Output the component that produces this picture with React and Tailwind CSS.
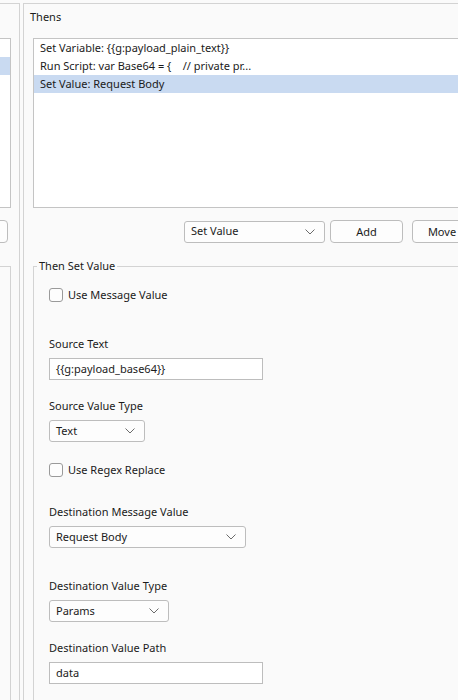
import React from "react";

function Chevron({ className = "" }) {
  return (
    <svg width="10" height="6" viewBox="0 0 10 6" className={className}>
      <path d="M0.5 0.5 L5 5 L9.5 0.5" fill="none" stroke="#6b6b6b" strokeWidth="1" />
    </svg>
  );
}

function Select({ value, w }) {
  return (
    <div
      className={`flex items-center justify-between h-[22px] border border-[#bdbdbd] rounded-[3px] bg-[#fdfdfd] pl-[6px] pr-[9px] ${w}`}
    >
      <span className="leading-[16px] -mt-[1px]">{value}</span>
      <Chevron />
    </div>
  );
}

function Checkbox({ label }) {
  return (
    <div className="flex items-center h-[16px]">
      <div className="w-[14px] h-[14px] border border-[#9a9a9a] rounded-[3px] bg-[#fdfdfd]" />
      <span className="ml-[5px]">{label}</span>
    </div>
  );
}

function Label({ children, mt }) {
  return <div className={`h-[16px] leading-[16px] ${mt}`}>{children}</div>;
}

function TextInput({ value }) {
  return (
    <div className="w-[214px] h-[22px] border border-[#bdbdbd] bg-white flex items-center pl-[6px]">
      {value}
    </div>
  );
}

export default function App() {
  return (
    <div
      className="w-[458px] h-[700px] overflow-hidden bg-[#fafafa] flex text-[11px] text-[#1b1b1b]"
      style={{ fontFamily: '"Noto Sans", "Open Sans", sans-serif' }}
    >
      {/* Left clipped panel */}
      <div className="w-[20px] shrink-0 mt-[3px] border-t border-r border-[#d3d3d3] overflow-hidden flex flex-col items-end">
        <div className="h-[34px]" />
        <div className="w-[200px] shrink-0 h-[170px] mr-[8px] border border-[#c4c4c4] bg-white flex flex-col">
          <div className="h-[18px]" />
          <div className="h-[18px] bg-[#c9daf1]" />
        </div>
        <div className="w-[100px] shrink-0 h-[23px] mt-[12px] mr-[11px] border border-[#bdbdbd] rounded-[4px] bg-[#fdfdfd]" />
        <div className="w-[200px] shrink-0 flex-1 mt-[23px] mr-[8px] border-t border-r border-[#d3d3d3]" />
      </div>

      {/* Right panel: Thens */}
      <div className="ml-[3px] flex-1 min-w-0 mt-[3px] border-t border-l border-[#d3d3d3] flex flex-col">
        <div className="h-[34px] pl-[6px] pt-[5px] leading-[16px]">Thens</div>
        <div className="ml-[9px] h-[170px] w-[600px] shrink-0 border border-[#c4c4c4] bg-white flex flex-col">
          <div className="h-[18px] leading-[18px] pl-[6px]">Set Variable: {"{{g:payload_plain_text}}"}</div>
          <div className="h-[18px] leading-[18px] pl-[6px] whitespace-pre">{"Run Script: var Base64 = {    // private pr..."}</div>
          <div className="h-[18px] leading-[18px] pl-[6px] bg-[#c9daf1]">Set Value: Request Body</div>
        </div>

        <div className="flex items-center mt-[12px] ml-[160px] shrink-0">
          <Select value="Set Value" w="w-[141px] shrink-0" />
          <div className="ml-[5px] w-[73px] h-[23px] shrink-0 border border-[#bdbdbd] rounded-[4px] bg-[#fdfdfd] flex items-center justify-center leading-[16px]">
            Add
          </div>
          <div className="ml-[9px] w-[60px] h-[23px] shrink-0 border border-[#bdbdbd] rounded-[4px] bg-[#fdfdfd] flex items-center justify-center leading-[16px]">
            Move
          </div>
        </div>

        {/* Then Set Value group */}
        <div className="relative ml-[9px] mt-[23px] w-[600px] flex-1 border-t border-l border-[#d3d3d3] pl-[15px] flex flex-col items-start">
          <div className="absolute left-[3px] top-[-9px] px-[2px] bg-[#fafafa] leading-[16px]">Then Set Value</div>
          <div className="mt-[20px]">
            <Checkbox label="Use Message Value" />
          </div>
          <Label mt="mt-[33px]">Source Text</Label>
          <div className="mt-[6px]">
            <TextInput value="{{g:payload_base64}}" />
          </div>
          <Label mt="mt-[18px]">Source Value Type</Label>
          <div className="mt-[6px]">
            <Select value="Text" w="w-[96px]" />
          </div>
          <div className="mt-[20px]">
            <Checkbox label="Use Regex Replace" />
          </div>
          <Label mt="mt-[26px]">Destination Message Value</Label>
          <div className="mt-[6px]">
            <Select value="Request Body" w="w-[197px]" />
          </div>
          <Label mt="mt-[30px]">Destination Value Type</Label>
          <div className="mt-[6px]">
            <Select value="Params" w="w-[120px]" />
          </div>
          <Label mt="mt-[18px]">Destination Value Path</Label>
          <div className="mt-[6px]">
            <TextInput value="data" />
          </div>
        </div>
      </div>
    </div>
  );
}
